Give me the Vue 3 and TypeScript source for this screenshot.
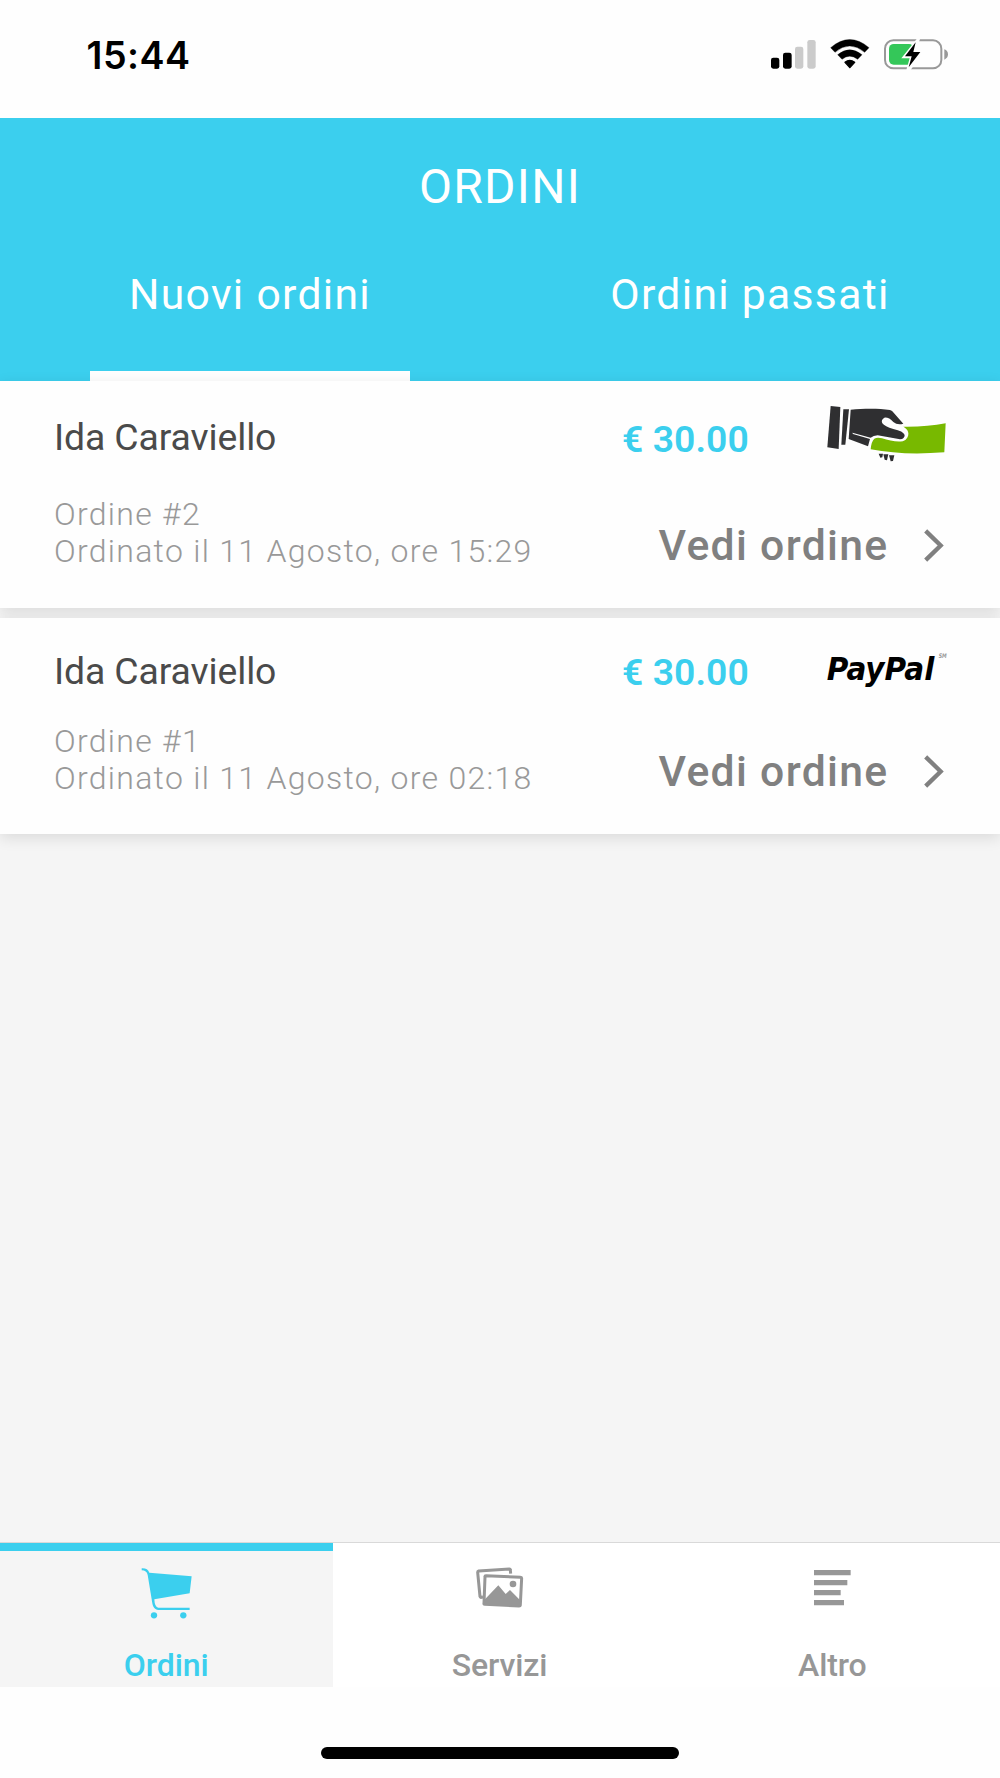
<script setup lang="ts">
import { ref } from 'vue'

interface Order {
  id: number
  customer: string
  placed: string
  total: string
  payment: 'cash' | 'paypal'
}

const tabs: string[] = ['Nuovi ordini', 'Ordini passati']
const activeTab = ref(0)

const orders: Order[] = [
  { id: 2, customer: 'Ida Caraviello', placed: '11 Agosto, ore 15:29', total: '€ 30.00', payment: 'cash' },
  { id: 1, customer: 'Ida Caraviello', placed: '11 Agosto, ore 02:18', total: '€ 30.00', payment: 'paypal' },
]

const sections: string[] = ['Ordini', 'Servizi', 'Altro']
const activeSection = ref(0)
</script>

<template>
  <div class="screen">
    <div class="status">
      <span class="clock">15:44</span>
      <svg class="status-icons" viewBox="0 0 660 210">
        <g fill="#000">
          <rect x="63" y="113" width="25" height="33" rx="7" />
          <rect x="99" y="98" width="26" height="48" rx="7" />
        </g>
        <g fill="#cbcbcb">
          <rect x="135" y="80" width="25" height="66" rx="7" />
          <rect x="172" y="60" width="25" height="86" rx="7" />
        </g>
        <g fill="#000">
          <path d="M242 83 Q299 34 357 83 L344 97 Q299 59 255 97 Z" stroke="#000" stroke-width="1" stroke-linejoin="round" />
          <path d="M263 104 Q299 75 336 104 L323 118 Q299 99 276 118 Z" stroke="#000" stroke-width="1" stroke-linejoin="round" />
          <path d="M285 127 Q299 115 314 127 L299.500 143 Z" stroke="#000" stroke-width="4" stroke-linejoin="round" />
        </g>
        <rect x="405" y="61" width="169" height="84" rx="25" fill="none" stroke="#999" stroke-width="6" />
        <path d="M583 88 Q594 92 594 103 Q594 114 583 119 Z" fill="#999" />
        <rect x="417" y="72" width="74" height="62" rx="14" fill="#34c759" />
        <path d="M500 57 L454 115 H479 L469 150 H482 L523 91 H499 L510 57 Z" fill="#fefefe" />
        <path d="M497 67 L465 109 H485 L476 142 L511 96 H490 Z" fill="#000" />
      </svg>
    </div>

    <header class="header">
      <h1>ORDINI</h1>
      <nav class="tabs">
        <button v-for="(tab, i) in tabs" :key="tab" class="tab" :class="{ active: i === activeTab }" @click="activeTab = i">
          <span>{{ tab }}</span>
          <i class="underline"></i>
        </button>
      </nav>
    </header>

    <main class="orders">
      <article v-for="order in orders" :key="order.id" class="card" :class="order.payment">
        <div class="summary">
          <span class="name">{{ order.customer }}</span>
          <span class="price">{{ order.total }}</span>
          <svg v-if="order.payment === 'cash'" class="pay" viewBox="0 0 450 240">
            <g fill="#2f2f31">
              <path d="M62 45 L91 48 L86 174 L52 169 Z" />
              <path d="M100 55 L117 55 L106 161 L94 161 Z" />
              <path d="M122 56 C160 53 205 52 240 57 Q247 59 251 65 L280 98 Q262 103 250 93 Q236 78 223 80 Q212 87 217 97 Q224 107 250 114 Q280 120 284 132 Q284 144 270 145 L203 133 Q190 134 182 140 L127 125 L129 129 L180 144 L174 166 L116 144 Z" />
              <path d="M206 188 H219 L217 199 L211 200 Z M220 190 H235 L231 208 L224 206 Z M237 193 H253 L249 210 L242 211 Z" />
            </g>
            <path d="M280 107 Q350 108 407 97 L403 184 Q280 194 182 175 Q184 151 193 143 Q202 138 216 142 C242 150 275 157 287 146 C303 130 293 113 280 107 Z" fill="#78b900" />
          </svg>
          <svg v-else class="pay" viewBox="0 0 450 240">
            <text x="50" y="156" class="paypal-word" textLength="323" lengthAdjust="spacingAndGlyphs">PayPal</text>
            <text x="386" y="91" class="service-mark" textLength="24" lengthAdjust="spacingAndGlyphs">SM</text>
          </svg>
        </div>
        <div class="details">
          <div class="meta">
            <div>Ordine #{{ order.id }}</div>
            <div>Ordinato il {{ order.placed }}</div>
          </div>
          <a class="view">
            <span>Vedi ordine</span>
            <svg viewBox="0 0 60 98"><path d="M5 5 L50 49 L5 93" fill="none" stroke="#808080" stroke-width="13" /></svg>
          </a>
        </div>
      </article>
    </main>

    <footer class="bottom">
      <button v-for="(section, i) in sections" :key="section" class="section" :class="{ active: i === activeSection }" @click="activeSection = i">
        <svg v-if="i === 0" viewBox="411 140 180 160">
          <path d="M425 144 Q443 143 448 157 L575 168 L569 219 L463 237 Q464 262 475 262 H569 V269 H474 C460 268 457 253 455 237 L443 164 Q440 150 425 150 Z" fill="currentColor" />
          <circle cx="462" cy="285" r="9.500" fill="currentColor" />
          <circle cx="550" cy="285" r="9.500" fill="currentColor" />
        </svg>
        <svg v-else-if="i === 1" viewBox="210 140 180 160">
          <path d="M332 160 L331 149 Q331 146 328 146 L236 152 Q233 153 233 156 L240 229 Q241 232 244 231 L249 230" fill="none" stroke="currentColor" stroke-width="9" />
          <path d="M258 166 L362 171 Q365 171 365 174 L361 254 Q361 257 357 257 L254 252 Q251 252 252 248 L255 169 Q255 166 258 166 Z" fill="none" stroke="currentColor" stroke-width="9" />
          <path d="M252 240 L295 195 L317 221 L330 209 L362 241 L361 258 L252 253 Z" fill="currentColor" />
          <circle cx="339" cy="191" r="10" fill="currentColor" />
        </svg>
        <svg v-else viewBox="309 140 180 160">
          <path d="M342 149 H452 V165 H342 Z M342 179 H442 V195 H342 Z M342 209 H422 V225 H342 Z M342 239 H432 V255 H342 Z" fill="currentColor" />
        </svg>
        <span>{{ section }}</span>
      </button>
    </footer>
    <div class="home"><i></i></div>
  </div>
</template>

<style>
body {
  margin: 0;
  background: #fefefe;
}
</style>

<style scoped>
.screen {
  width: 1000px;
  height: 1778px;
  display: flex;
  flex-direction: column;
  overflow: hidden;
  background: #fefefe;
  font-family: Roboto, "Liberation Sans", sans-serif;
}
button {
  border: 0;
  padding: 0;
  margin: 0;
  background: none;
  font: inherit;
  color: inherit;
}
.status {
  height: 118px;
  box-sizing: border-box;
  padding: 20px 30px 0 86.5px;
  display: flex;
  justify-content: space-between;
}
.clock {
  font-family: Inter, sans-serif;
  font-weight: 600;
  font-size: 37.6px;
  line-height: 72px;
  letter-spacing: 0.5px;
  color: #000;
}
.status-icons {
  width: 220px;
  height: 70px;
}
.header {
  height: 263px;
  background: #3bcfee;
  color: #fff;
  display: flex;
  flex-direction: column;
}
h1 {
  margin: 0;
  font-size: 48px;
  font-weight: 400;
  line-height: 137px;
  letter-spacing: 1.25px;
  text-align: center;
}
.tabs {
  flex: 1;
  display: flex;
}
.tab {
  flex: 1;
  display: flex;
  flex-direction: column;
  justify-content: space-between;
  align-items: center;
  font-size: 42.67px;
  letter-spacing: 1.3px;
  line-height: 79px;
}
.underline {
  width: 320px;
  height: 10.5px;
}
.tab.active .underline {
  background: #fefefe;
}
.orders {
  flex: 1;
  display: flex;
  flex-direction: column;
  gap: 10px;
  background: #f5f5f5;
}
.card {
  box-sizing: border-box;
  height: 227px;
  padding: 8px 40px 0 54px;
  background: #fefefe;
  box-shadow: 0 4px 14px rgba(0, 0, 0, 0.11);
}
.card.paypal {
  height: 216px;
  padding-top: 4px;
}
.summary {
  height: 98px;
  display: flex;
  align-items: center;
  line-height: 98px;
  font-size: 37.33px;
}
.name {
  width: 568px;
  color: #4a4a4a;
  letter-spacing: -0.1px;
}
.card.cash .name {
  margin-top: -2px;
}
.price {
  width: 188px;
  padding-top: 1px;
  color: #3bcfee;
  font-weight: 600;
  letter-spacing: 0.05px;
}
.pay {
  width: 150px;
  height: 80px;
  flex: none;
  align-self: flex-start;
  margin-top: 1.5px;
}
.card.paypal .pay {
  margin-top: 6px;
}
.paypal-word {
  font: italic 700 96px "DejaVu Sans", sans-serif;
  fill: #000;
}
.service-mark {
  font: italic 700 19px "DejaVu Sans", sans-serif;
  fill: #999;
}
.details {
  display: flex;
  justify-content: space-between;
  align-items: flex-start;
  padding-right: 16px;
}
.meta {
  padding-top: 9px;
  font-size: 32px;
  font-weight: 300;
  line-height: 37.4px;
  letter-spacing: 1.29px;
  color: #999;
}
.card.paypal .meta {
  padding-top: 3px;
}
.view {
  height: 60px;
  margin-top: 28px;
  display: flex;
  align-items: center;
  gap: 35.5px;
  color: #808080;
  font-size: 42.67px;
  font-weight: 500;
  line-height: 60px;
  letter-spacing: 1.333px;
}
.card.paypal .view {
  margin-top: 21px;
}
.view svg {
  width: 20px;
  height: 33px;
}
.bottom {
  height: 144px;
  display: flex;
  box-sizing: border-box;
  background: #fff;
  box-shadow: 0 -1px 0 #d9d9d9;
}
.section {
  flex: 1;
  display: flex;
  flex-direction: column;
  align-items: center;
  box-sizing: border-box;
  padding-top: 24px;
  color: #979797;
  font-size: 32px;
  font-weight: 500;
  letter-spacing: -0.1px;
}
.section svg {
  width: 60px;
  height: 53.3px;
}
.section span {
  margin-top: 25px;
  margin-right: 1px;
  line-height: 40px;
}
.section:last-child span {
  margin-right: 2px;
}
.section.active {
  color: #3bcfee;
  background: #f5f5f5;
  border-top: 8px solid #3bcfee;
  padding-top: 16px;
}
.home {
  height: 91px;
  display: flex;
  justify-content: center;
}
.home i {
  width: 358px;
  height: 12px;
  margin-top: 60px;
  border-radius: 6px;
  background: #000;
}
</style>
